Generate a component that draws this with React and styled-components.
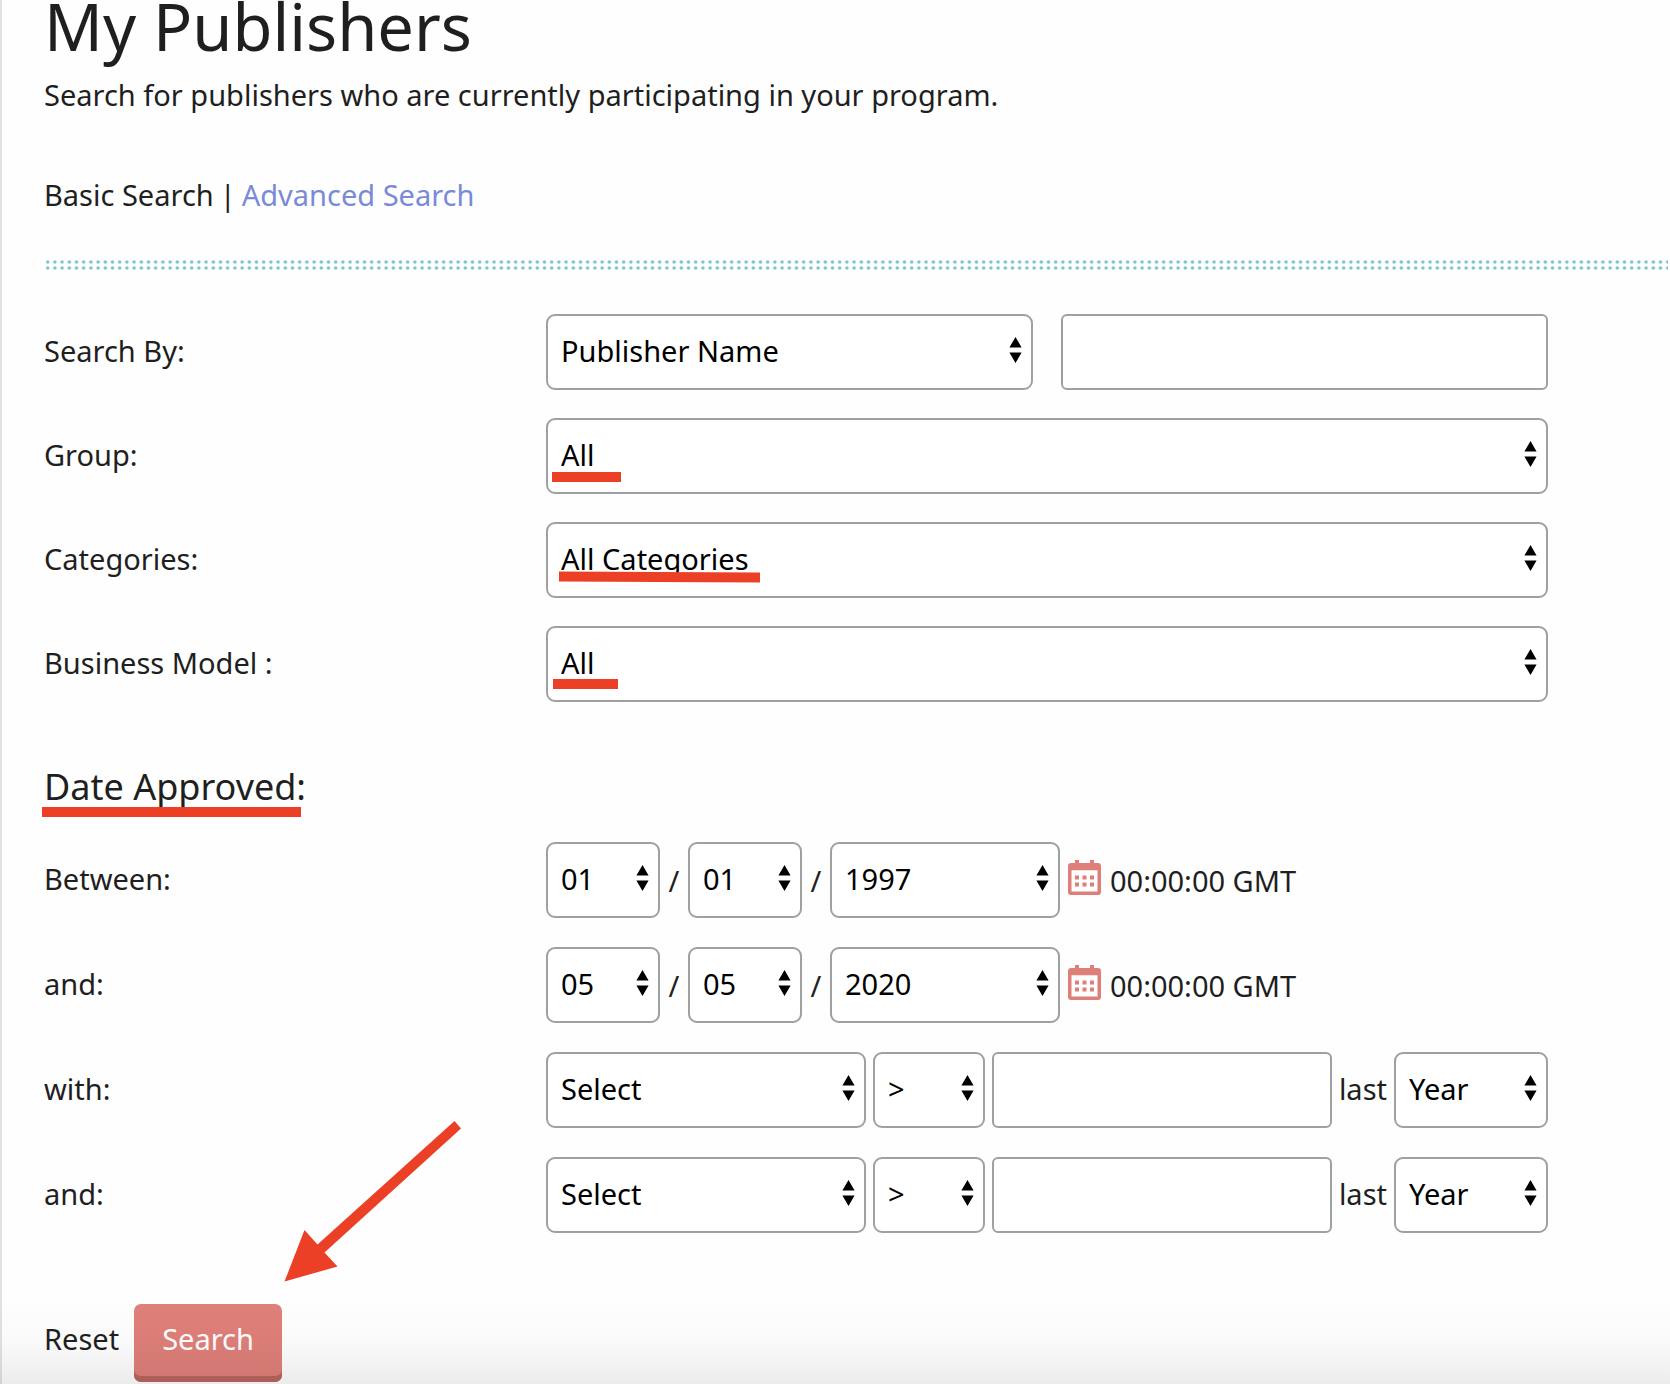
import React from "react";
import styled, { createGlobalStyle } from "styled-components";

const ink = "#1f1f1f";
const coral = "#df7f79";
const marker = "#eb4026";
const outline = "#a0a0a0";

const arrows =
  "url(\"data:image/svg+xml,%3Csvg xmlns='http://www.w3.org/2000/svg' width='13' height='26' viewBox='0 0 13 26'%3E%3Cpath d='M6.5 0L12.6 10.6H.4zM6.5 26L12.6 15.4H.4z'/%3E%3C/svg%3E\")";

const GlobalStyle = createGlobalStyle`
  *, *::before, *::after { box-sizing: border-box; }
  body { margin: 0; background: #fff; }
  button, input, select { font: inherit; }
`;

const Page = styled.main`
  position: relative;
  min-height: 100vh;
  padding: 0 2px 2px 42px;
  border-left: 2px solid #e2e2e2;
  background: #fefefe;
  color: ${ink};
  font-family: "Noto Sans", "Open Sans", sans-serif;
  font-size: 29px;
  line-height: 40px;
`;

const Title = styled.h1`
  margin: 0;
  font-size: 65px;
  font-weight: 400;
  line-height: 52px;
`;

const Intro = styled.p`
  margin: 23px 0 0;
`;

const Modes = styled.nav`
  display: flex;
  gap: 6px;
  margin-top: 60px;
`;

const ModeLink = styled.a`
  color: #7a8ad6;
  text-decoration: none;
`;

const Dots = styled.svg`
  display: block;
  width: 100%;
  height: 10px;
  margin-top: 45px;
`;

const Form = styled.form`
  margin: 44px 120px 0 0;
`;

const Rows = styled.div`
  display: flex;
  flex-direction: column;
  gap: ${(p) => p.$gap}px;
`;

const Row = styled.div`
  display: flex;
  align-items: center;
`;

const Label = styled.label`
  flex: 0 1 502px;
  padding-bottom: 2px;
`;

const Controls = styled.div`
  display: flex;
  flex: 1 1 0;
  align-items: center;
  min-width: 0;
  gap: ${(p) => p.$gap || 0}px;
`;

const PairedControls = styled.div`
  display: grid;
  flex: 1 1 0;
  grid-template-columns: repeat(2, minmax(0, 1fr));
  gap: 28px;
`;

const SelectBox = styled.div`
  position: relative;
  flex: ${(p) => (p.$width ? `0 0 ${p.$width}px` : "1 1 0")};
`;

const Select = styled.select`
  display: block;
  appearance: none;
  width: 100%;
  height: 76px;
  padding: 0 30px 2px 13px;
  border: 2px solid ${outline};
  border-radius: 9px;
  background: #fff ${arrows} no-repeat right 9px top 21px;
  color: #000;
`;

const TextInput = styled.input`
  flex: 1 1 0;
  min-width: 0;
  height: 76px;
  padding: 0 12px;
  border: 2px solid ${outline};
  border-radius: 6px;
  background: #fff;
  color: #000;
`;

const SectionTitle = styled.h2`
  position: relative;
  width: fit-content;
  margin: 60px 0 30px;
  font-size: 36px;
  font-weight: 400;
  line-height: 50px;
`;

const Slash = styled.span`
  width: 28px;
  padding-top: 2px;
  text-align: center;
`;

const CalendarButton = styled.button`
  display: flex;
  margin: 0 9px 0 8px;
  padding: 0 0 6px;
  border: 0;
  background: none;
  color: ${coral};
`;

const Time = styled.span`
  padding-top: 2px;
`;

const Unit = styled.span`
  padding-bottom: 2px;
`;

const Underline = styled.span`
  position: absolute;
  left: ${(p) => p.$left}px;
  top: ${(p) => p.$top}px;
  width: ${(p) => p.$width}px;
  height: 10px;
  background: ${marker};
  transform: rotate(${(p) => p.$tilt || 0}deg);
  pointer-events: none;
`;

const Actions = styled.div`
  position: relative;
  display: flex;
  align-items: flex-start;
  gap: 15px;
  margin-top: 71px;
`;

const ResetButton = styled.button`
  padding: 15px 0;
  border: 0;
  background: none;
  color: ${ink};
`;

const SearchButton = styled.button`
  height: 78px;
  padding: 0 28px 8px;
  border: 0;
  border-radius: 7px;
  background: ${coral};
  box-shadow: inset 0 -6px 0 #b9655f;
  color: #fff;
`;

const Pointer = styled.svg`
  position: absolute;
  left: 240px;
  bottom: calc(100% + 22px);
  pointer-events: none;
`;

const Fade = styled.div`
  position: absolute;
  inset: auto 0 0 -2px;
  height: 84px;
  background: linear-gradient(rgba(0, 0, 0, 0), rgba(0, 0, 0, 0.02) 50%, rgba(0, 0, 0, 0.07));
  pointer-events: none;
`;

function Picker({ width, mark, options, ...rest }) {
  return (
    <SelectBox $width={width}>
      <Select {...rest}>
        {options.map((o) => (
          <option key={o}>{o}</option>
        ))}
      </Select>
      {mark && <Underline $left={mark.left} $top={mark.top} $width={mark.width} $tilt={mark.tilt} />}
    </SelectBox>
  );
}

function CalendarIcon() {
  return (
    <svg width="33" height="35" viewBox="0 0 33 35" fill="currentColor" aria-hidden="true">
      <path
        fillRule="evenodd"
        d="M7 0h4v3h11V0h4v3h4a3 3 0 0 1 3 3v26a3 3 0 0 1-3 3H3a3 3 0 0 1-3-3V6a3 3 0 0 1 3-3h4zM3.5 10.300v21.200h26V10.300z"
      />
      <path d="M7 15.500h4v4H7zM14.500 15.500h4v4h-4zM22 15.500h4v4h-4zM7 22.500h4v4H7zM14.500 22.500h4v4h-4zM22 22.500h4v4h-4z" />
    </svg>
  );
}

function DateRow({ id, label, day, month, year }) {
  return (
    <Row>
      <Label htmlFor={id}>{label}</Label>
      <Controls>
        <Picker id={id} width={114} options={[month]} />
        <Slash>/</Slash>
        <Picker aria-label="Day" width={114} options={[day]} />
        <Slash>/</Slash>
        <Picker aria-label="Year" width={230} options={[year]} />
        <CalendarButton type="button" aria-label="Open calendar">
          <CalendarIcon />
        </CalendarButton>
        <Time>00:00:00 GMT</Time>
      </Controls>
    </Row>
  );
}

function MetricRow({ id, label }) {
  return (
    <Row>
      <Label htmlFor={id}>{label}</Label>
      <Controls $gap={7}>
        <Picker id={id} width={320} options={["Select"]} />
        <Picker aria-label="Comparison" width={112} options={[">", "<"]} />
        <TextInput type="text" aria-label="Amount" />
        <Unit>last</Unit>
        <Picker aria-label="Period" width={154} options={["Year", "Month"]} />
      </Controls>
    </Row>
  );
}

export default function App() {
  return (
    <>
      <GlobalStyle />
      <Page>
        <Title>My Publishers</Title>
        <Intro>Search for publishers who are currently participating in your program.</Intro>
        <Modes>
          <span>Basic Search</span>
          <span>|</span>
          <ModeLink href="#advanced">Advanced Search</ModeLink>
        </Modes>
        <Dots aria-hidden="true">
          <defs>
            <pattern id="dots" x="1.5" width="7.2" height="10" patternUnits="userSpaceOnUse">
              <circle cx="2.2" cy="2" r="1.8" fill="#7cc5c8" />
              <circle cx="2.2" cy="8" r="1.8" fill="#7cc5c8" />
            </pattern>
          </defs>
          <rect x="1.5" width="100%" height="10" fill="url(#dots)" />
        </Dots>

        <Form onSubmit={(e) => e.preventDefault()}>
          <Rows $gap={28}>
            <Row>
              <Label htmlFor="search-by">Search By:</Label>
              <PairedControls>
                <Picker id="search-by" options={["Publisher Name", "Publisher ID"]} />
                <TextInput type="text" aria-label="Search text" />
              </PairedControls>
            </Row>
            <Row>
              <Label htmlFor="group">Group:</Label>
              <Controls>
                <Picker id="group" options={["All"]} mark={{ left: 6, top: 54, width: 69 }} />
              </Controls>
            </Row>
            <Row>
              <Label htmlFor="categories">Categories:</Label>
              <Controls>
                <Picker
                  id="categories"
                  options={["All Categories"]}
                  mark={{ left: 13, top: 50, width: 201, tilt: 0.3 }}
                />
              </Controls>
            </Row>
            <Row>
              <Label htmlFor="model">Business Model :</Label>
              <Controls>
                <Picker id="model" options={["All"]} mark={{ left: 7, top: 53, width: 65 }} />
              </Controls>
            </Row>
          </Rows>

          <SectionTitle>
            Date Approved:
            <Underline $left={-2} $top={45} $width={259} />
          </SectionTitle>

          <Rows $gap={29}>
            <DateRow id="from" label="Between:" month="01" day="01" year="1997" />
            <DateRow id="to" label="and:" month="05" day="05" year="2020" />
            <MetricRow id="metric-1" label="with:" />
            <MetricRow id="metric-2" label="and:" />
          </Rows>

          <Actions>
            <ResetButton type="reset">Reset</ResetButton>
            <SearchButton type="submit">Search</SearchButton>
            <Pointer width="178" height="161" viewBox="0 0 178 161" aria-hidden="true">
              <path d="M0.500 160.500L20.500 109L33.500 123.500L170.500 0L177 7.500L40.500 131.500L53.500 145.500Z" fill={marker} />
            </Pointer>
          </Actions>
        </Form>
        <Fade />
      </Page>
    </>
  );
}
